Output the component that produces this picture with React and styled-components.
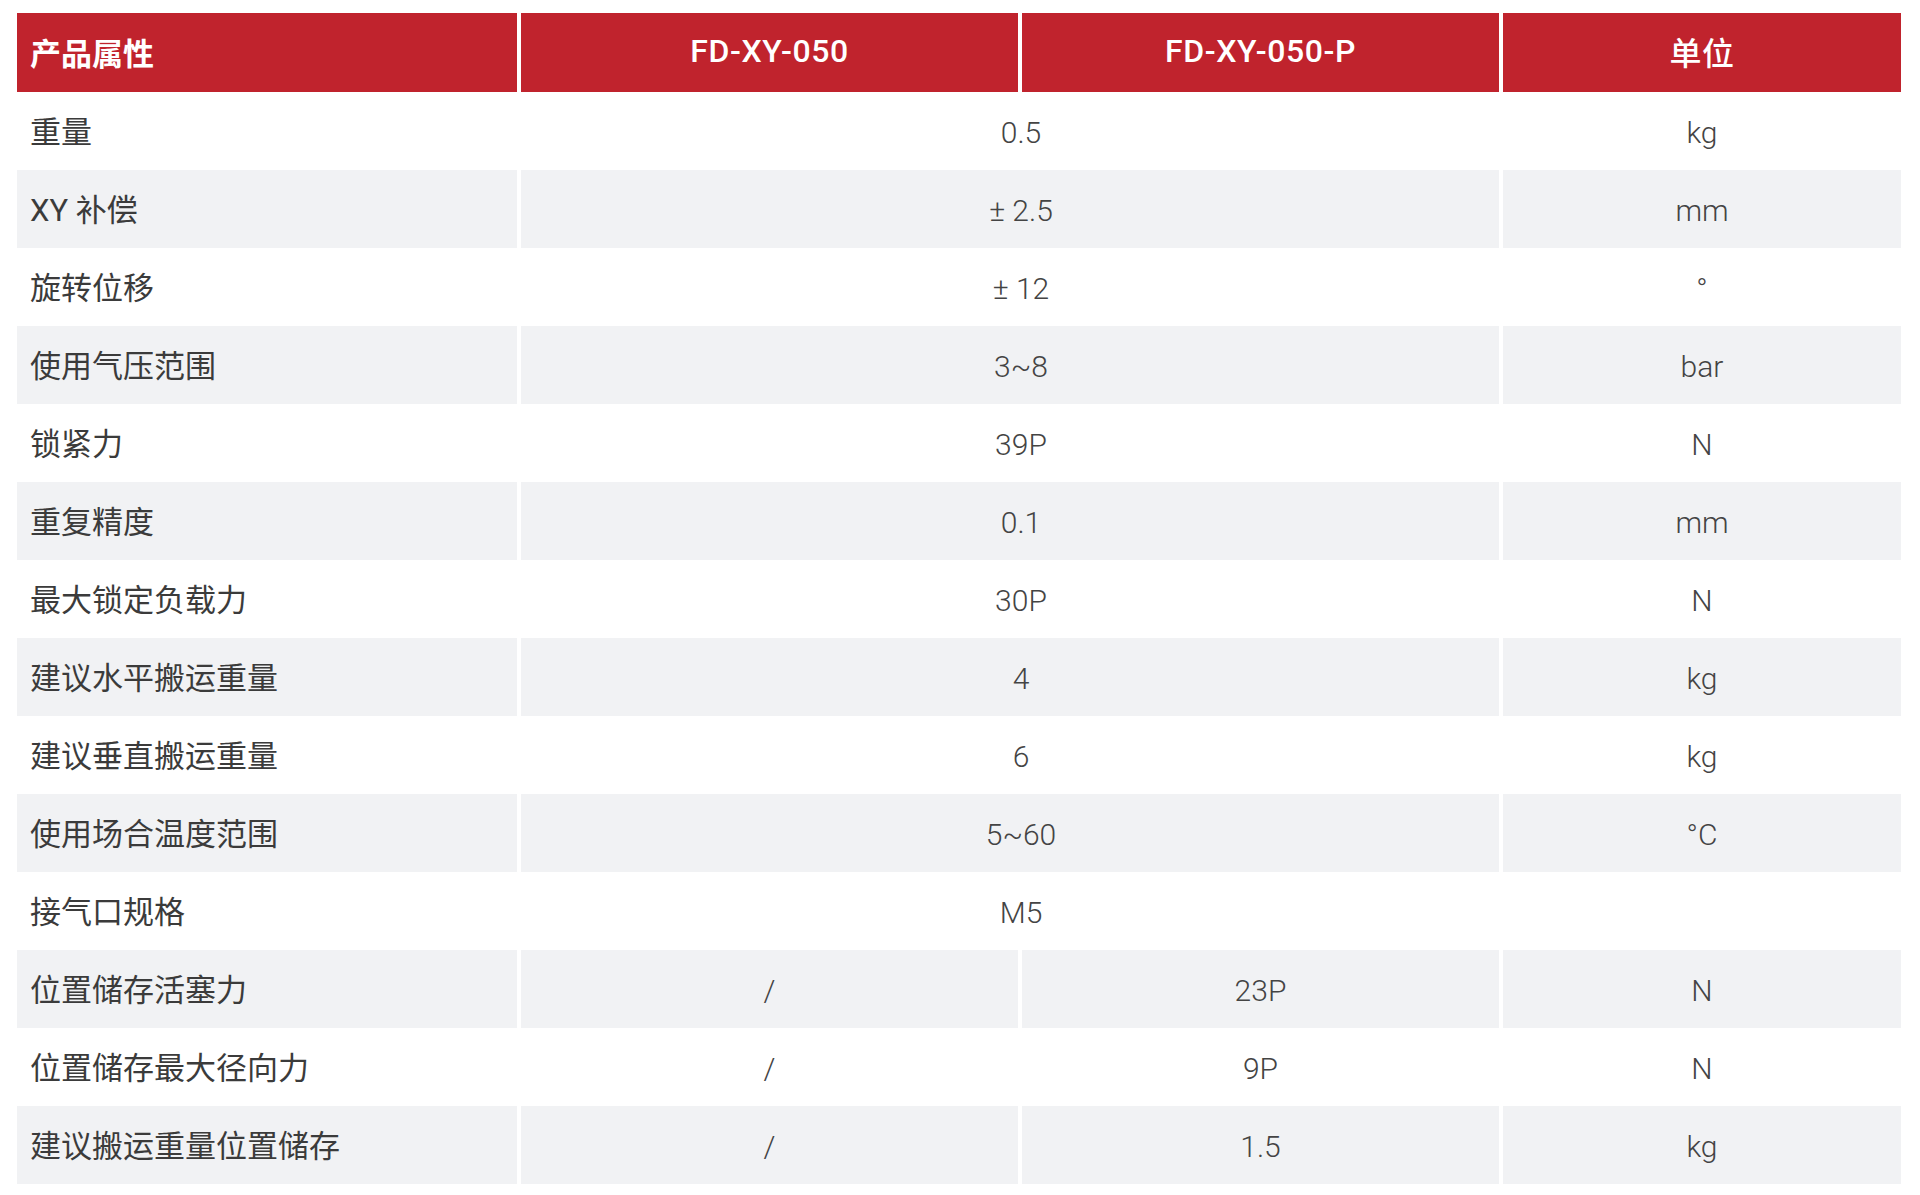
import React from 'react';
import styled, { createGlobalStyle } from 'styled-components';

const GlobalStyle = createGlobalStyle`
  html, body {
    margin: 0;
    padding: 0;
    background: #ffffff;
  }
  body {
    font-family: Roboto, "Noto Sans CJK SC", sans-serif;
  }
`;

const Page = styled.div`
  padding: 13px 19px 8px 17px;
`;

const Table = styled.table`
  width: 1884px;
  table-layout: fixed;
  border-collapse: separate;
  border-spacing: 0;
`;

const HeadCell = styled.th`
  height: 76px;
  padding: 0 ${p => (p.$left ? '13px' : '0')} 3px;
  background: #c0232d;
  color: #ffffff;
  font-size: ${p => (p.$left ? '31px' : '32px')};
  font-weight: ${p => (p.$left ? 700 : 500)};
  letter-spacing: ${p => (p.$left ? '0' : '0.6px')};
  text-align: ${p => (p.$left ? 'left' : 'center')};
  border-left: ${p => (p.$first ? 'none' : '4px solid #ffffff')};
`;

const Row = styled.tr`
  height: 78px;
  background: ${p => (p.$shaded ? '#f1f2f4' : '#ffffff')};
`;

const Cell = styled.td`
  padding: 0 13px 3px;
  color: #3b3b3b;
  font-size: 31px;
  font-weight: 400;
  text-align: left;
  vertical-align: middle;
`;

const ValueCell = styled.td`
  padding: 4px 0 0 ${p => (p.$merged ? '22px' : '0')};
  color: #444444;
  font-size: 30px;
  line-height: 1.2;
  font-weight: 300;
  text-align: center;
  vertical-align: middle;
  border-left: 4px solid #ffffff;
`;

const rows = [
  { label: '重量', value: '0.5', unit: 'kg' },
  { label: 'XY 补偿', value: '± 2.5', unit: 'mm' },
  { label: '旋转位移', value: '± 12', unit: '°' },
  { label: '使用气压范围', value: '3~8', unit: 'bar' },
  { label: '锁紧力', value: '39P', unit: 'N' },
  { label: '重复精度', value: '0.1', unit: 'mm' },
  { label: '最大锁定负载力', value: '30P', unit: 'N' },
  { label: '建议水平搬运重量', value: '4', unit: 'kg' },
  { label: '建议垂直搬运重量', value: '6', unit: 'kg' },
  { label: '使用场合温度范围', value: '5~60', unit: '°C' },
  { label: '接气口规格', value: 'M5', unit: '' },
  { label: '位置储存活塞力', a: '/', b: '23P', unit: 'N' },
  { label: '位置储存最大径向力', a: '/', b: '9P', unit: 'N' },
  { label: '建议搬运重量位置储存', a: '/', b: '1.5', unit: 'kg' },
];

export default function App() {
  return (
    <Page>
      <GlobalStyle />
      <Table>
        <colgroup>
          <col style={{ width: 500 }} />
          <col style={{ width: 501 }} />
          <col style={{ width: 481 }} />
          <col style={{ width: 402 }} />
        </colgroup>
        <thead>
          <tr>
            <HeadCell $first $left>产品属性</HeadCell>
            <HeadCell>FD-XY-050</HeadCell>
            <HeadCell>FD-XY-050-P</HeadCell>
            <HeadCell>单位</HeadCell>
          </tr>
        </thead>
        <tbody>
          {rows.map((r, i) => (
            <Row key={r.label} $shaded={i % 2 === 1}>
              <Cell>{r.label}</Cell>
              {r.value !== undefined ? (
                <ValueCell colSpan={2} $merged>{r.value}</ValueCell>
              ) : (
                <>
                  <ValueCell>{r.a}</ValueCell>
                  <ValueCell>{r.b}</ValueCell>
                </>
              )}
              <ValueCell>{r.unit}</ValueCell>
            </Row>
          ))}
        </tbody>
      </Table>
    </Page>
  );
}
